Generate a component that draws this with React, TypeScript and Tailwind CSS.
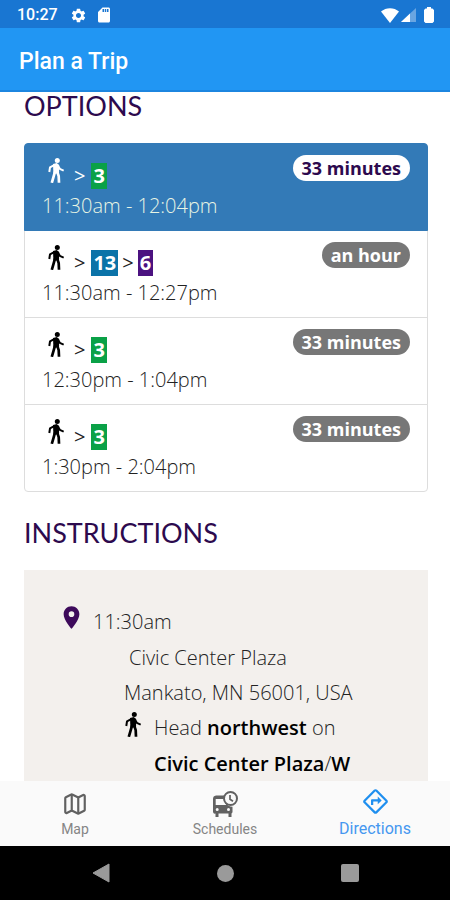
import { MdOutlineDirections, MdPlace, MdSdCard, MdSettings } from "react-icons/md";
import { Map as MapIcon } from "lucide-react";

const routeColors = {
  green: "bg-[#0aa147]",
  teal: "bg-[#0b73a8]",
  purple: "bg-[#4b1280]",
};

type Route = { name: string; color: keyof typeof routeColors };

const options: { routes: Route[]; time: string; duration: string }[] = [
  { routes: [{ name: "3", color: "green" }], time: "11:30am - 12:04pm", duration: "33 minutes" },
  {
    routes: [
      { name: "13", color: "teal" },
      { name: "6", color: "purple" },
    ],
    time: "11:30am - 12:27pm",
    duration: "an hour",
  },
  { routes: [{ name: "3", color: "green" }], time: "12:30pm - 1:04pm", duration: "33 minutes" },
  { routes: [{ name: "3", color: "green" }], time: "1:30pm - 2:04pm", duration: "33 minutes" },
];

function WalkIcon() {
  return (
    <svg viewBox="0 0 16 25" className="h-[25px] w-4 shrink-0" aria-hidden="true">
      <circle cx="9.3" cy="2.5" r="2.5" fill="currentColor" />
      <path d="M5 6 8.800 5 11.200 7.200 11 15.500 5.400 15.500Z" fill="currentColor" />
      <g fill="none" stroke="currentColor" strokeLinejoin="round">
        <path d="M6.600 6.900 2 9.300 1.300 14" strokeWidth="2" />
        <path d="M9.600 7 11.800 10.800 15.700 12.600" strokeWidth="2" />
        <path d="M7 13.600 5.600 18.600 3.800 24.800" strokeWidth="2.700" />
        <path d="M9.200 13.600 10.700 18.200 11 24.800" strokeWidth="2.700" />
      </g>
    </svg>
  );
}

function ScheduleIcon() {
  return (
    <svg viewBox="0 0 26 26" className="size-[26px]" aria-hidden="true">
      <path
        fill="currentColor"
        fillRule="evenodd"
        d="M4 4.5h10a7.5 7.5 0 0 0 6.5 11.3V21a1.5 1.5 0 0 1-1 1.4V26h-3v-3.5h-10V26h-3v-3.5A2 2 0 0 1 1 21V8a3.500 3.500 0 0 1 3-3.500ZM3.700 8v6h10.600a9 9 0 0 1-2-6ZM5.200 17a1.500 1.500 0 1 0 0 3 1.500 1.500 0 0 0 0-3ZM16.500 17a1.500 1.500 0 1 0 0 3 1.500 1.500 0 0 0 0-3Z"
      />
      <circle cx="18.500" cy="7.500" r="6.500" fill="#fafafa" stroke="currentColor" strokeWidth="2" />
      <path d="M18 4v4.200l3 2" fill="none" stroke="currentColor" strokeWidth="1.700" />
    </svg>
  );
}

export default function App() {
  return (
    <div className="flex h-dvh flex-col overflow-hidden bg-white font-['Open_Sans','Noto_Sans',sans-serif] text-[20px]">
      <header className="shrink-0 font-[Roboto,sans-serif] font-medium text-white">
        <div className="flex h-7 items-center justify-between bg-[#1976d2] pt-0.5 pr-4 pl-[17px] text-base leading-6">
          <div className="flex items-center">
            <span>10:27</span>
            <MdSettings className="ml-3 size-[17px]" />
            <MdSdCard className="ml-2 size-[18px]" />
          </div>
          <div className="flex items-center">
            <svg viewBox="0 0 18 15" className="h-[15px] w-[18px]" aria-hidden="true">
              <path d="M0 3.500C5-1 13-1 18 3.500L9 15Z" fill="white" />
            </svg>
            <svg viewBox="0 0 15 14" className="ml-0.5 h-[14px] w-[15px]" aria-hidden="true">
              <path d="M15 0V14H0Z" fill="white" opacity=".35" />
              <path d="M9 5.600V14H0Z" fill="white" />
            </svg>
            <svg viewBox="0 0 10 16" className="ml-2 h-4 w-[10px]" aria-hidden="true">
              <path d="M3 0h4v1.500h1.500L10 3v11.500L8.500 16h-7L0 14.500V3l1.500-1.500H3Z" fill="white" />
            </svg>
          </div>
        </div>
        <div className="flex h-16 items-center border-b-2 border-[#1c86e0] bg-[#2196f3] px-[19px] pt-1.5">
          <h1 className="text-[23px]">Plan a Trip</h1>
        </div>
      </header>

      <main className="min-h-0 flex-1 pr-[22px] pl-6 text-[#222]">
        <h2 className="font-[Lato,sans-serif] text-[27px] leading-7 text-[#2d0a4e]">OPTIONS</h2>
        <ul className="mt-[23px]">
          {options.map((option, index) => (
            <li key={option.time} className="group not-first:-mt-px">
              <button
                type="button"
                aria-pressed={index === 0}
                className={`flex h-[88px] w-full items-start justify-between border px-[17px] text-left group-first:rounded-t group-last:rounded-b ${
                  index === 0 ? "relative border-[#337ab7] bg-[#337ab7] text-white" : "border-[#ddd] bg-white"
                }`}
              >
                <span className="flex flex-col pt-3">
                  <span className="flex h-8 items-start pl-1.5">
                    <span className={index === 0 ? "pt-0.5" : "pt-0.5 text-black"}>
                      <WalkIcon />
                    </span>
                    {option.routes.map((route, position) => (
                      <span key={route.name} className="flex items-center pt-[7px] leading-[26px]">
                        <span className={position === 0 ? "pr-1.5 pl-2.5" : "px-1"}>&gt;</span>
                        <span className={`px-0.5 font-bold text-white ${routeColors[route.color]}`}>{route.name}</span>
                      </span>
                    ))}
                  </span>
                  <span className={`leading-9 font-light ${index === 0 ? "text-[#e8f5e4]" : ""}`}>{option.time}</span>
                </span>
                <span
                  className={`mt-[11px] rounded-full px-[9px] text-lg leading-[26px] font-bold ${
                    index === 0 ? "bg-white text-[#2d0a4e]" : "bg-[#777] text-white"
                  }`}
                >
                  {option.duration}
                </span>
              </button>
            </li>
          ))}
        </ul>

        <h2 className="mt-[27px] font-[Lato,sans-serif] text-[27px] leading-7 text-[#2d0a4e]">INSTRUCTIONS</h2>
        <section className="mt-[23px] bg-[#f3f0ed] pt-[34px] pb-8 pl-[34px] leading-9 font-light">
          <div className="flex">
            <MdPlace className="size-[27px] text-[#3d0a5b]" />
            <span className="pl-2">11:30am</span>
          </div>
          <address className="pl-[66px] leading-[35px] not-italic">
            <span className="block pl-[5px]">Civic Center Plaza</span>
            <span className="block">Mankato, MN 56001, USA</span>
          </address>
          <div className="flex pl-[67px] leading-9">
            <span className="pt-0.5 text-black">
              <WalkIcon />
            </span>
            <p className="w-[230px] pl-[13px]">
              Head <b className="font-semibold text-black">northwest</b> on{" "}
              <b className="font-semibold text-black">Civic Center Plaza</b>/
              <b className="font-semibold text-black">W</b>
            </p>
          </div>
        </section>
      </main>

      <nav className="relative grid h-[65px] shrink-0 grid-cols-3 bg-[#fafafa] font-[Roboto,sans-serif] text-sm text-[#858585]">
        <a href="#map" className="flex flex-col items-center pt-2.5">
          <MapIcon className="size-[26px] text-[#616161]" />
          <span className="mt-0.5">Map</span>
        </a>
        <a href="#schedules" className="flex flex-col items-center pt-2.5">
          <span className="text-[#616161]">
            <ScheduleIcon />
          </span>
          <span className="mt-0.5">Schedules</span>
        </a>
        <a href="#directions" className="flex flex-col items-center pt-[7px] text-base text-[#4597f0]" aria-current="page">
          <MdOutlineDirections className="size-[27px] text-[#1f8fef]" />
          <span className="mt-0.5">Directions</span>
        </a>
      </nav>

      <footer className="relative flex h-[54px] shrink-0 items-center justify-center gap-[107px] bg-black text-[#9a9a9a]">
        <button type="button" aria-label="Back">
          <svg viewBox="0 0 18 20" className="h-5 w-[18px]">
            <path d="M17 1v18L1 10Z" fill="currentColor" stroke="currentColor" strokeLinejoin="round" />
          </svg>
        </button>
        <button type="button" aria-label="Home" className="size-[17px] rounded-full bg-current" />
        <button type="button" aria-label="Recent apps" className="size-[18px] rounded-xs bg-current" />
      </footer>
    </div>
  );
}
